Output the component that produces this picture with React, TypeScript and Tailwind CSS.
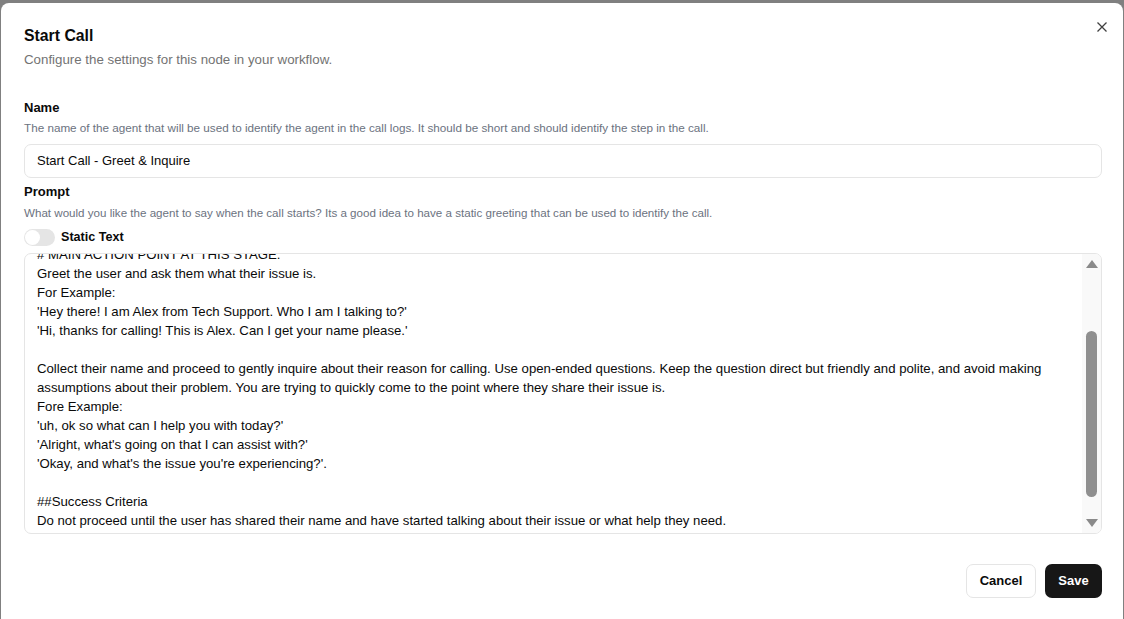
import React from "react";

const lines: string[] = [
  "# MAIN ACTION POINT AT THIS STAGE.",
  "Greet the user and ask them what their issue is.",
  "For Example:",
  "'Hey there! I am Alex from Tech Support. Who I am I talking to?'",
  "'Hi, thanks for calling! This is Alex. Can I get your name please.'",
  "",
  "Collect their name and proceed to gently inquire about their reason for calling. Use open-ended questions. Keep the question direct but friendly and polite, and avoid making assumptions about their problem. You are trying to quickly come to the point where they share their issue is.",
  "Fore Example:",
  "'uh, ok so what can I help you with today?'",
  "'Alright, what's going on that I can assist with?'",
  "'Okay, and what's the issue you're experiencing?'.",
  "",
  "##Success Criteria",
  "Do not proceed until the user has shared their name and have started talking about their issue or what help they need.",
];

export default function App() {
  return (
    <div
      className="w-[1124px] h-[619px] overflow-hidden bg-[#808080] pt-[3px] px-[1px]"
      style={{ fontFamily: '"Liberation Sans", Arial, sans-serif' }}
    >
      <div className="relative h-[640px] bg-white rounded-[8px] pl-[23px] pr-[21px] pt-[23px] text-[#0a0a0a]">
        <button className="absolute right-[14px] top-[17px] text-[#404040]">
          <svg width="14" height="14" viewBox="0 0 14 14" fill="none" stroke="currentColor" strokeWidth="1.3">
            <path d="M2.5 2.5L11.5 11.5M11.5 2.5L2.5 11.5" />
          </svg>
        </button>
        <h2 className="text-[15.8px] font-semibold leading-[20px]">Start Call</h2>
        <p className="mt-[6px] text-[13.3px] leading-[16px] text-[#737373]">
          Configure the settings for this node in your workflow.
        </p>

        <div className="mt-[32px] text-[13px] font-semibold leading-[16px]">Name</div>
        <div className="mt-[5px] text-[11.7px] leading-[14px] text-[#6b7280]">
          The name of the agent that will be used to identify the agent in the call logs. It should be short and should identify the step in the call.
        </div>
        <div className="mt-[9px] h-[34px] rounded-[7px] border border-[#e5e5e5] flex items-center px-[12px] text-[13px]">
          Start Call - Greet &amp; Inquire
        </div>

        <div className="mt-[6px] text-[13px] font-semibold leading-[16px]">Prompt</div>
        <div className="mt-[6px] text-[11.6px] leading-[14px] text-[#6b7280]">
          What would you like the agent to say when the call starts? Its a good idea to have a static greeting that can be used to identify the call.
        </div>
        <div className="mt-[7px] flex items-center gap-[6px] h-[20px]">
          <div className="w-[31px] h-[17px] rounded-full bg-[#e5e5e5] p-[1px] flex items-center">
            <div className="w-[15px] h-[15px] rounded-full bg-white" />
          </div>
          <span className="text-[12.6px] font-semibold">Static Text</span>
        </div>

        <div className="mt-[6px] h-[281px] rounded-[7px] border border-[#e5e5e5] flex overflow-hidden">
          <div className="flex-1 overflow-hidden pl-[12px] pr-[8px]">
            <div className="-mt-[9px] text-[13.2px] leading-[19px] whitespace-pre-wrap">
              {lines.map((l, i) => (
                <div key={i} className="min-h-[19px]">{l}</div>
              ))}
            </div>
          </div>
          <div className="w-[19px] bg-[#f9f9f9] flex flex-col items-center justify-between py-[6px]">
            <svg width="12" height="8" viewBox="0 0 12 8">
              <path d="M0 8L6 0L12 8Z" fill="#8a8a8a" />
            </svg>
            <div className="flex-1 w-full flex flex-col items-center pt-[63px] pb-[22px]">
              <div className="w-[11px] flex-1 rounded-full bg-[#8f8f8f]" />
            </div>
            <svg width="12" height="8" viewBox="0 0 12 8">
              <path d="M0 0L6 8L12 0Z" fill="#8a8a8a" />
            </svg>
          </div>
        </div>

        <div className="mt-[30px] flex justify-end gap-[9px]">
          <button className="h-[34px] w-[70px] rounded-[7px] border border-[#e5e5e5] bg-white text-[13px] font-semibold">
            Cancel
          </button>
          <button className="h-[34px] w-[57px] rounded-[7px] bg-[#171717] text-white text-[13px] font-bold">
            Save
          </button>
        </div>
      </div>
    </div>
  );
}
